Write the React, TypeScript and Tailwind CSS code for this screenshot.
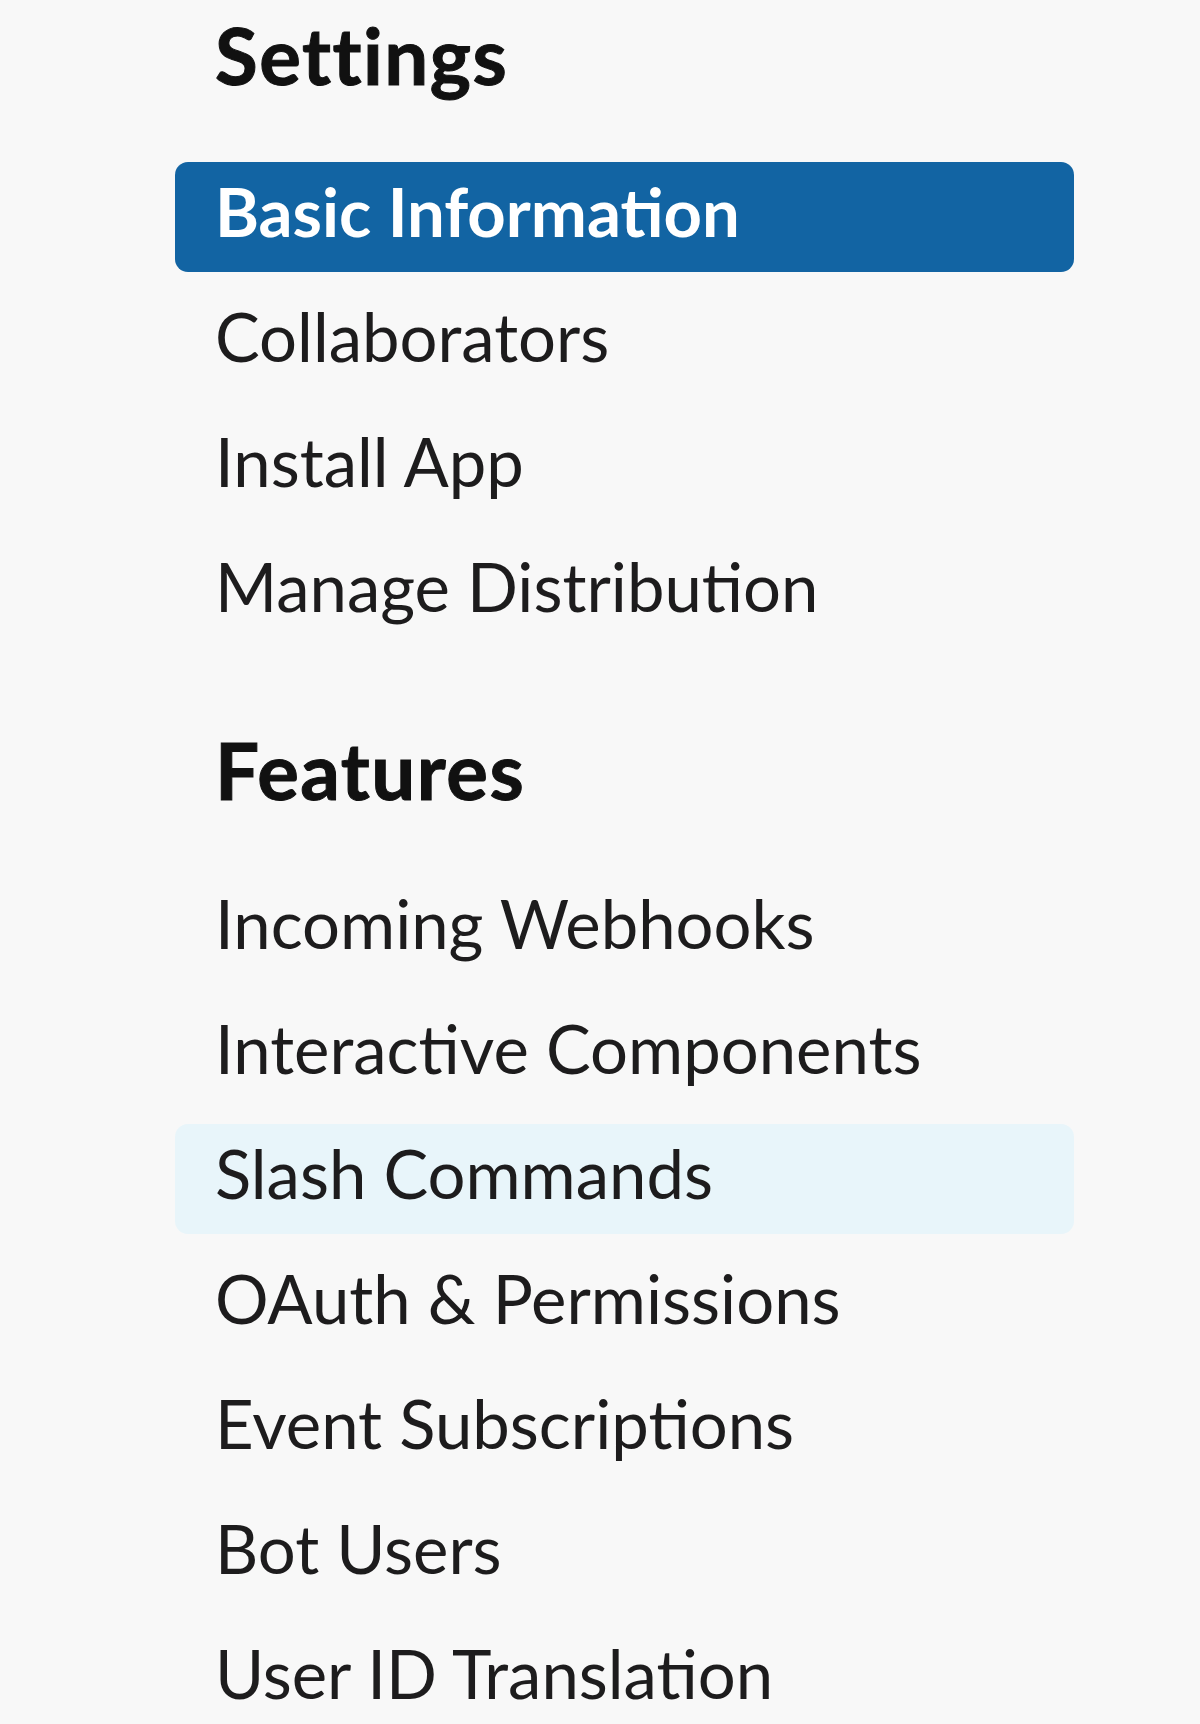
import React from "react";

const settings = ["Basic Information", "Collaborators", "Install App", "Manage Distribution"];
const features = [
  "Incoming Webhooks",
  "Interactive Components",
  "Slash Commands",
  "OAuth & Permissions",
  "Event Subscriptions",
  "Bot Users",
  "User ID Translation",
];

function Item({ label, active, hover }: { label: string; active?: boolean; hover?: boolean }) {
  const cls = active
    ? "bg-[#1264a3] text-white font-bold"
    : hover
    ? "bg-[#e8f5fa] text-[#1d1c1d]"
    : "text-[#1d1c1d]";
  return (
    <div className={`h-[110px] rounded-[13px] pl-[40px] pt-[9px] text-[67px] leading-[1.2] whitespace-nowrap ${cls}`}>
      {label}
    </div>
  );
}

function Heading({ children, className = "" }: { children: React.ReactNode; className?: string }) {
  return (
    <div
      className={`pl-[40px] text-[78px] leading-[1.2] font-bold tracking-[1.5px] text-[#111] [-webkit-text-stroke:1px_#111] ${className}`}
    >
      {children}
    </div>
  );
}

export default function App() {
  return (
    <div
      className="w-[1200px] h-[1724px] bg-[#f8f8f8] overflow-hidden"
      style={{ fontFamily: "Lato, 'Noto Sans', sans-serif" }}
    >
      <div className="ml-[175px] w-[899px] pt-[9px]">
        <Heading>Settings</Heading>
        <div className="mt-[59px] flex flex-col gap-[15px]">
          {settings.map((s, i) => (
            <Item key={s} label={s} active={i === 0} />
          ))}
        </div>
        <Heading className="mt-[77px]">Features</Heading>
        <div className="mt-[57px] flex flex-col gap-[15px]">
          {features.map((s) => (
            <Item key={s} label={s} hover={s === "Slash Commands"} />
          ))}
        </div>
      </div>
    </div>
  );
}
